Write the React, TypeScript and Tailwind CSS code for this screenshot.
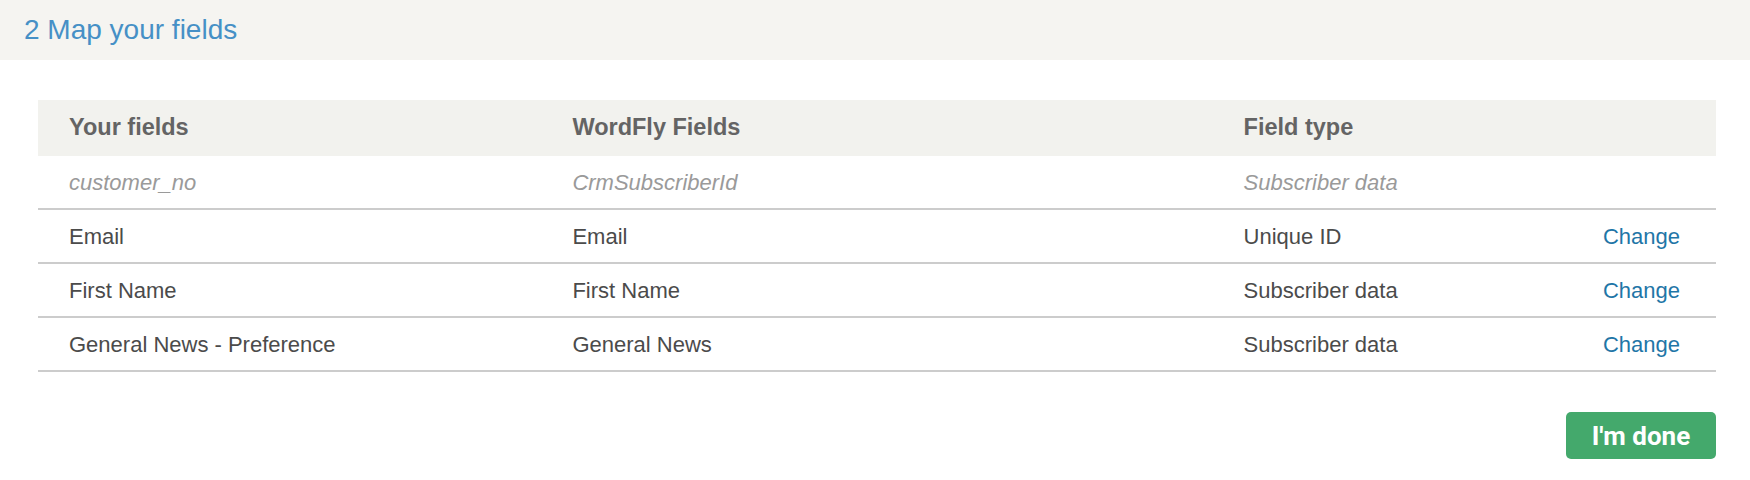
import React from "react";

type Row = { yours: string; wf: string; type: string; change: boolean; muted?: boolean };

const rows: Row[] = [
  { yours: "customer_no", wf: "CrmSubscriberId", type: "Subscriber data", change: false, muted: true },
  { yours: "Email", wf: "Email", type: "Unique ID", change: true },
  { yours: "First Name", wf: "First Name", type: "Subscriber data", change: true },
  { yours: "General News - Preference", wf: "General News", type: "Subscriber data", change: true },
];

export default function App() {
  return (
    <div className="w-[1750px] h-[480px] bg-white font-['Liberation_Sans',Arial,sans-serif] overflow-hidden">
      <div className="h-[60px] bg-[#f5f4f1] flex items-center pl-[24px]">
        <h2 className="text-[28px] leading-none text-[#4690c6]">2 Map your fields</h2>
      </div>
      <div className="pl-[38px] pr-[34px] pt-[40px]">
        <div className="grid grid-cols-[30%_40%_1fr_auto]">
          <div className="contents">
            {["Your fields", "WordFly Fields", "Field type", ""].map((h, i) => (
              <div
                key={i}
                className="h-[56px] bg-[#f2f2ee] flex items-center pl-[31px] text-[23.5px] font-bold text-[#646464]"
              >
                {h}
              </div>
            ))}
          </div>
          {rows.map((r, idx) => {
            const cell =
              "h-[54px] flex items-center pl-[31px] border-b-2 border-[#cccccc] text-[22px] " +
              (r.muted ? "italic text-[#9a9a9a]" : "text-[#4b4b4b]");
            return (
              <div key={idx} className="contents">
                <div className={cell}>{r.yours}</div>
                <div className={cell}>{r.wf}</div>
                <div className={cell}>{r.type}</div>
                <div className="h-[54px] flex items-center justify-end pr-[36px] border-b-2 border-[#cccccc] text-[22px]">
                  {r.change ? <a className="text-[#1f76a7] cursor-pointer">Change</a> : null}
                </div>
              </div>
            );
          })}
        </div>
        <div className="flex justify-end pt-[40px]">
          <button className="w-[150px] h-[47px] rounded-[5px] bg-[#44a96c] text-white text-[26px] font-bold font-['Roboto',sans-serif] leading-none">
            I'm done
          </button>
        </div>
      </div>
    </div>
  );
}
